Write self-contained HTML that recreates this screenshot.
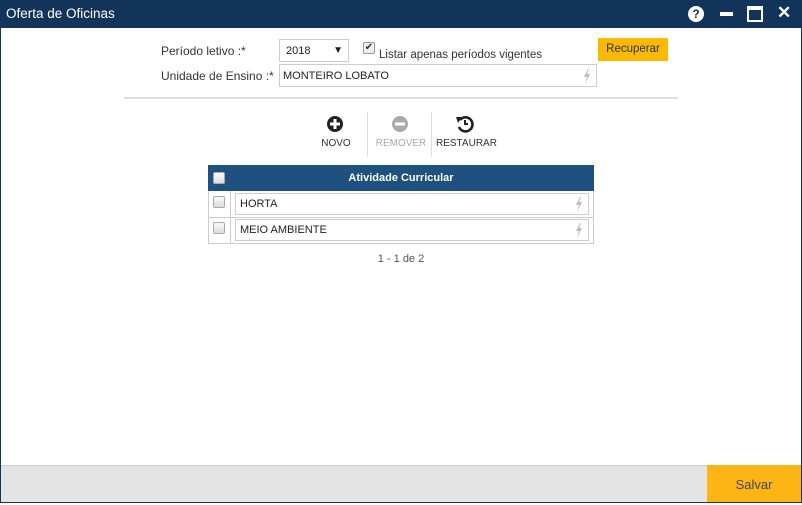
<!DOCTYPE html>
<html><head><meta charset="utf-8"><style>
*{box-sizing:border-box;margin:0;padding:0}
body{width:802px;height:503px;position:relative;background:#fff;font-family:"Liberation Sans",sans-serif;font-size:12px;color:#333;overflow:hidden}
.a{position:absolute}
.frame{left:0;top:0;width:802px;height:503px;border:1px solid #12345a;border-top:none}
.title{left:0;top:0;width:802px;height:28px;background:#12345a;color:#fff;font-size:13.5px;line-height:28px;padding-left:6px}
.inp{border:1px solid #ccc;background:#fff;height:23px;display:flex;align-items:center;padding-left:3px;font-size:11px;color:#222}
.bolt{position:absolute;right:5px;top:4px}
.cb{width:12px;height:12px;border:1px solid #aaa;border-radius:2px;background:linear-gradient(#fafafa,#ddd)}
.lbl{font-size:10px;color:#333;text-align:center}
</style></head><body>
<div class="a title">Oferta de Oficinas</div>
<div class="a" style="left:688px;top:6px;width:16px;height:16px;border-radius:50%;background:#fff;color:#12345a;font-weight:bold;font-size:12px;text-align:center;line-height:16px">?</div>
<div class="a" style="left:720px;top:12px;width:13px;height:4px;background:#fff"></div>
<div class="a" style="left:747px;top:6px;width:16px;height:16px;border:2px solid #fff;border-top-width:4px"></div>
<div class="a" style="left:777px;top:3px;color:#fff;font-weight:bold;font-size:17px">✕</div>
<div class="a frame"></div>

<div class="a" style="left:161px;top:44px;font-size:12px">Período letivo :*</div>
<div class="a inp" style="left:279px;top:39px;width:70px;padding-left:6px">2018<span style="position:absolute;right:5px;top:5px;font-size:10px">▼</span></div>
<div class="a" style="left:363px;top:42px;width:12px;height:12px;border:1px solid #999;border-radius:2px;background:#eee;font-size:10px;line-height:10px;text-align:center">✔</div>
<div class="a" style="left:379px;top:49px;font-size:11.5px">Listar apenas períodos vigentes</div>
<div class="a" style="left:598px;top:38px;width:70px;height:23px;background:#fbb900;line-height:23px;text-align:center;font-size:11.5px">Recuperar</div>
<div class="a" style="left:161px;top:69px;font-size:12px">Unidade de Ensino :*</div>
<div class="a inp" style="left:279px;top:64px;width:318px">MONTEIRO LOBATO<svg class="bolt" width="8" height="15"><path d="M5 0 L1 8 L4 8 L2 15 L7 5 L4 5 L6 0Z" fill="#bbb"/></svg></div>
<div class="a" style="left:124px;top:97px;width:554px;height:2px;background:#ddd"></div>

<svg class="a" style="left:326px;top:115px" width="18" height="18"><circle cx="9" cy="9" r="8" fill="#222"/><rect x="4" y="7.5" width="10" height="3" fill="#fff"/><rect x="7.5" y="4" width="3" height="10" fill="#fff"/></svg>
<div class="a lbl" style="left:316px;top:138px;width:40px">NOVO</div>
<div class="a" style="left:367px;top:112px;width:1px;height:45px;background:#ddd"></div>
<svg class="a" style="left:391px;top:115px" width="18" height="18"><circle cx="9" cy="9" r="8" fill="#aaa"/><rect x="4" y="7.5" width="10" height="3" fill="#fff"/></svg>
<div class="a lbl" style="left:375px;top:138px;width:52px;color:#aaa">REMOVER</div>
<div class="a" style="left:431px;top:112px;width:1px;height:45px;background:#ddd"></div>
<svg class="a" style="left:455px;top:114px" width="19" height="19"><path d="M5 6 A7 7 0 1 1 4 13" fill="none" stroke="#222" stroke-width="2.6"/><path d="M1 3 L7 3 L3 9Z" fill="#222"/><path d="M10 6 V10 H13" fill="none" stroke="#222" stroke-width="2"/></svg>
<div class="a lbl" style="left:436px;top:138px;width:60px">RESTAURAR</div>

<div class="a" style="left:208px;top:165px;width:386px;height:26px;background:#1e5080;color:#fff;font-weight:bold;font-size:11px;line-height:26px;text-align:center">Atividade Curricular</div>
<div class="a cb" style="left:213px;top:172px"></div>
<div class="a" style="left:208px;top:191px;width:386px;height:53px;border:1px solid #ccc;border-top:none"></div>
<div class="a" style="left:209px;top:217px;width:384px;height:1px;background:#ccc"></div>
<div class="a" style="left:230px;top:191px;width:1px;height:52px;background:#ccc"></div>
<div class="a cb" style="left:213px;top:196px"></div>
<div class="a cb" style="left:213px;top:222px"></div>
<div class="a inp" style="left:235px;top:193px;width:354px;height:22px;padding-left:4px">HORTA<svg class="bolt" style="top:3px" width="8" height="15"><path d="M5 0 L1 8 L4 8 L2 15 L7 5 L4 5 L6 0Z" fill="#bbb"/></svg></div>
<div class="a inp" style="left:235px;top:219px;width:354px;height:22px;padding-left:4px">MEIO AMBIENTE<svg class="bolt" style="top:3px" width="8" height="15"><path d="M5 0 L1 8 L4 8 L2 15 L7 5 L4 5 L6 0Z" fill="#bbb"/></svg></div>
<div class="a" style="left:360px;top:253px;width:82px;text-align:center;font-size:11px;color:#555">1 - 1 de 2</div>

<div class="a" style="left:1px;top:465px;width:800px;height:37px;background:#e4e4e4;border-top:1px solid #ccc"></div>
<div class="a" style="left:707px;top:465px;width:94px;height:37px;background:#fdb515;line-height:40px;text-align:center;font-size:13px;color:#444">Salvar</div>
</body></html>
